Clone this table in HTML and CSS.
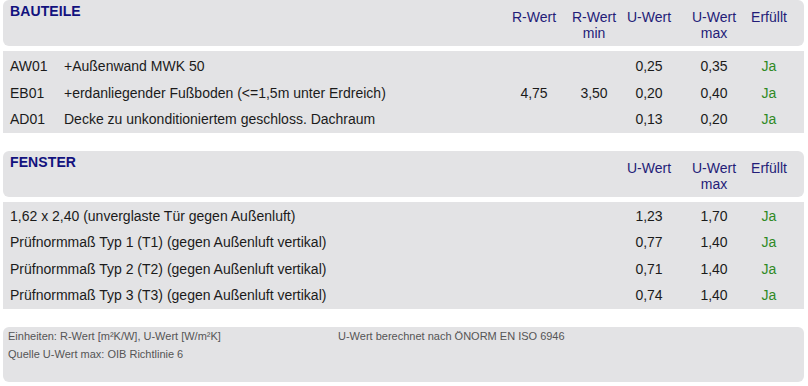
FILE: index.html
```html
<!DOCTYPE html>
<html lang="de">
<head>
<meta charset="utf-8">
<title>Bauteile</title>
<link rel="stylesheet" href="styles.css">
</head>
<body>
<div class="page">
  <section class="section">
    <div class="head cols">
      <div class="title">BAUTEILE</div>
      <div class="colh">R-Wert</div>
      <div class="colh">R-Wert<br>min</div>
      <div class="colh">U-Wert</div>
      <div class="colh">U-Wert<br>max</div>
      <div class="colh">Erfüllt</div>
    </div>
    <div class="body body-first">
      <div class="row cols">
        <div class="name"><span class="code">AW01</span>+Außenwand MWK 50</div>
        <div class="num"></div><div class="num"></div>
        <div class="num">0,25</div><div class="num">0,35</div><div class="ok">Ja</div>
      </div>
      <div class="row cols">
        <div class="name"><span class="code">EB01</span>+erdanliegender Fußboden (&lt;=1,5m unter Erdreich)</div>
        <div class="num">4,75</div><div class="num">3,50</div>
        <div class="num">0,20</div><div class="num">0,40</div><div class="ok">Ja</div>
      </div>
      <div class="row cols">
        <div class="name"><span class="code">AD01</span>Decke zu unkonditioniertem geschloss. Dachraum</div>
        <div class="num"></div><div class="num"></div>
        <div class="num">0,13</div><div class="num">0,20</div><div class="ok">Ja</div>
      </div>
    </div>
  </section>

  <section class="section">
    <div class="head cols">
      <div class="title">FENSTER</div>
      <div class="colh"></div>
      <div class="colh"></div>
      <div class="colh">U-Wert</div>
      <div class="colh">U-Wert<br>max</div>
      <div class="colh">Erfüllt</div>
    </div>
    <div class="body body-second">
      <div class="row cols">
        <div class="name">1,62 x 2,40 (unverglaste Tür gegen Außenluft)</div>
        <div class="num"></div><div class="num"></div>
        <div class="num">1,23</div><div class="num">1,70</div><div class="ok">Ja</div>
      </div>
      <div class="row cols">
        <div class="name">Prüfnormmaß Typ 1 (T1) (gegen Außenluft vertikal)</div>
        <div class="num"></div><div class="num"></div>
        <div class="num">0,77</div><div class="num">1,40</div><div class="ok">Ja</div>
      </div>
      <div class="row cols">
        <div class="name">Prüfnormmaß Typ 2 (T2) (gegen Außenluft vertikal)</div>
        <div class="num"></div><div class="num"></div>
        <div class="num">0,71</div><div class="num">1,40</div><div class="ok">Ja</div>
      </div>
      <div class="row cols">
        <div class="name">Prüfnormmaß Typ 3 (T3) (gegen Außenluft vertikal)</div>
        <div class="num"></div><div class="num"></div>
        <div class="num">0,74</div><div class="num">1,40</div><div class="ok">Ja</div>
      </div>
    </div>
  </section>

  <footer class="footer">
    <div class="foot-col">
      <div>Einheiten: R-Wert [m²K/W], U-Wert [W/m²K]</div>
      <div>Quelle U-Wert max: OIB Richtlinie 6</div>
    </div>
    <div class="foot-col">
      <div>U-Wert berechnet nach ÖNORM EN ISO 6946</div>
    </div>
  </footer>
</div>
</body>
</html>
```
FILE: styles.css
```css
html, body {
  margin: 0;
  padding: 0;
  background: #ffffff;
}
body {
  font-family: "Liberation Sans", Arial, sans-serif;
  font-size: 14px;
  color: #1b1b1b;
}
.page {
  width: 801px;
  padding: 0 4px 0 3px;
  display: flex;
  flex-direction: column;
}
.section {
  display: flex;
  flex-direction: column;
  gap: 5px;
  margin-bottom: 18px;
}
.cols {
  display: grid;
  grid-template-columns: 1fr 80px 40px 70px 60px 50px;
  padding-right: 10px;
}
.head {
  background: #e3e3e5;
  border-radius: 6px;
  height: 46px;
  box-sizing: border-box;
  align-items: start;
}
.title {
  font-weight: bold;
  color: #12127e;
  letter-spacing: 0.1px;
  padding: 4px 0 0 7px;
  line-height: 15px;
}
.colh {
  justify-self: unsafe center;
  white-space: nowrap;
  text-align: center;
  color: #231c78;
  line-height: 16px;
  padding-top: 9px;
}
.body {
  background: #e3e3e5;
  display: flex;
  flex-direction: column;
}
.body-first {
  padding-top: 2px;
}
.body-second {
  padding-top: 1px;
}
.row {
  height: 26.5px;
  align-items: center;
}
.name {
  padding-left: 7px;
  white-space: nowrap;
  display: flex;
}
.code {
  width: 54px;
  flex: none;
}
.num, .ok {
  justify-self: unsafe center;
  white-space: nowrap;
}
.ok {
  color: #2f8a25;
}
.footer {
  background: #e3e3e5;
  border-radius: 6px;
  height: 55px;
  box-sizing: border-box;
  display: grid;
  grid-template-columns: 330px 1fr;
  padding: 0 5px;
  font-size: 11px;
  line-height: 18px;
  color: #555555;
}
```
